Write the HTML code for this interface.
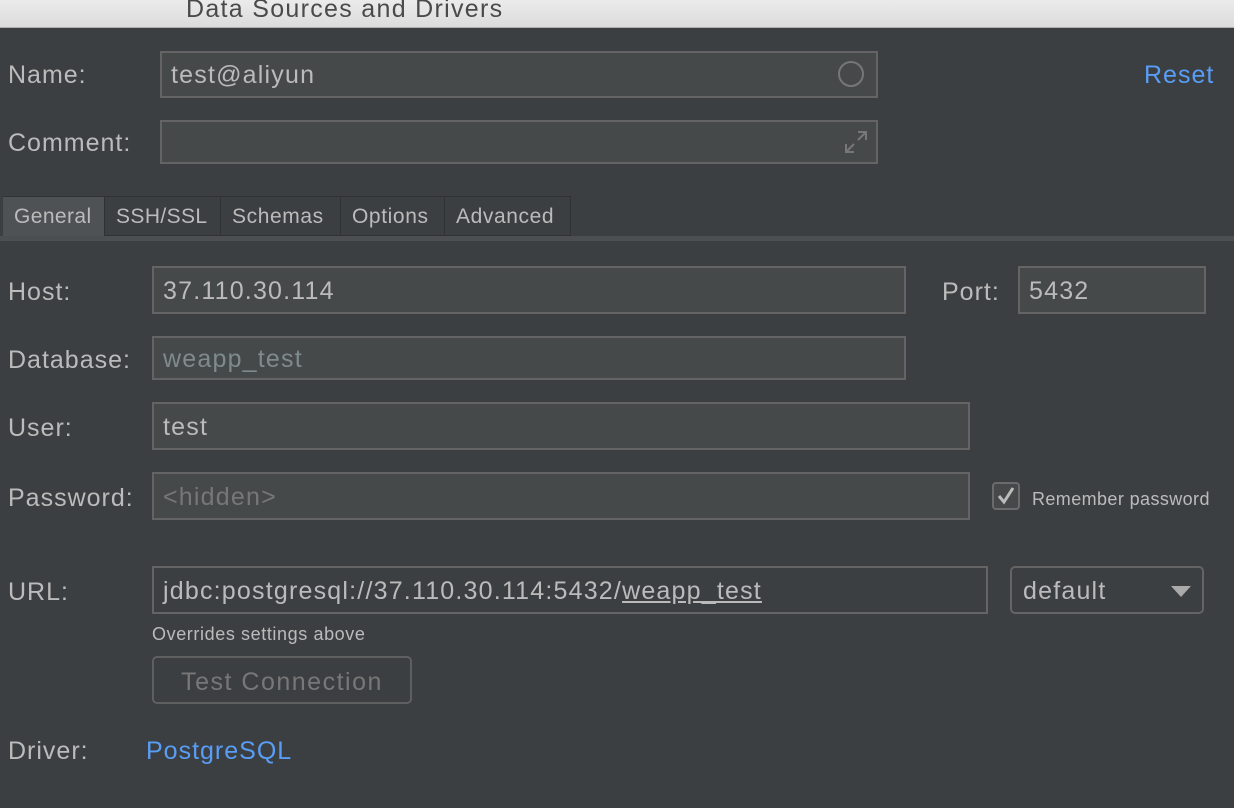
<!DOCTYPE html>
<html><head><style>
body{margin:0;width:1234px;height:808px;background:#3c3f41;font-family:"Liberation Sans",sans-serif;color:#bbbbbb;position:relative;overflow:hidden}
.a{position:absolute}
.t{position:absolute;font-size:25px;line-height:28px;white-space:nowrap;letter-spacing:1px}
.f{position:absolute;background:#45494a;border:2px solid #646464;box-sizing:border-box;font-size:25px;letter-spacing:1.2px;color:#bbbbbb;padding-left:9px;display:flex;align-items:center;padding-top:2px}
</style></head><body>
<div class="a" style="left:0;top:0;width:1234px;height:27px;background:linear-gradient(#ebebeb,#dcdcdc);border-bottom:1px solid #b0b0b0"></div>
<div class="t" style="left:186px;top:-5px;color:#4a4a4a;letter-spacing:1.3px">Data Sources and Drivers</div>

<div class="t" style="left:8px;top:61px">Name:</div>
<div class="f" style="left:160px;top:51px;width:718px;height:47px">test@aliyun</div>
<div class="a" style="left:838px;top:61px;width:26px;height:26px;border:2px solid #777;border-radius:50%;box-sizing:border-box"></div>
<div class="t" style="left:1144px;top:61px;color:#589df6">Reset</div>

<div class="t" style="left:8px;top:129px">Comment:</div>
<div class="f" style="left:160px;top:120px;width:718px;height:44px"></div>
<svg class="a" style="left:842px;top:128px" width="28" height="28" viewBox="0 0 28 28" fill="none" stroke="#777" stroke-width="2"><path d="M16 4h8v8M24 4l-8 8M12 24H4v-8M4 24l8-8"/></svg>

<div class="a" style="left:3px;top:196px;width:568px;height:40px;border:1px solid #2f3133;box-sizing:border-box;background:#3c3f41"></div>
<div class="a" style="left:3px;top:197px;width:101px;height:39px;background:#4e5254"></div>
<div class="a" style="left:104px;top:197px;width:1px;height:39px;background:#2f3133"></div>
<div class="a" style="left:220px;top:197px;width:1px;height:39px;background:#2f3133"></div>
<div class="a" style="left:340px;top:197px;width:1px;height:39px;background:#2f3133"></div>
<div class="a" style="left:444px;top:197px;width:1px;height:39px;background:#2f3133"></div>
<div class="t" style="left:14px;top:203px;font-size:21px;letter-spacing:0.4px">General</div>
<div class="t" style="left:116px;top:203px;font-size:21px;letter-spacing:0.4px">SSH/SSL</div>
<div class="t" style="left:232px;top:203px;font-size:21px;letter-spacing:0.6px">Schemas</div>
<div class="t" style="left:352px;top:203px;font-size:21px;letter-spacing:0.6px">Options</div>
<div class="t" style="left:456px;top:203px;font-size:21px;letter-spacing:0.6px">Advanced</div>
<div class="a" style="left:0;top:236px;width:1234px;height:5px;background:#4b4f52"></div>

<div class="t" style="left:8px;top:278px">Host:</div>
<div class="f" style="left:152px;top:266px;width:754px;height:48px">37.110.30.114</div>
<div class="t" style="left:942px;top:278px">Port:</div>
<div class="f" style="left:1018px;top:266px;width:188px;height:48px">5432</div>

<div class="t" style="left:8px;top:346px">Database:</div>
<div class="f" style="left:152px;top:336px;width:754px;height:44px;color:#7f8b8b">weapp_test</div>

<div class="t" style="left:8px;top:414px">User:</div>
<div class="f" style="left:152px;top:402px;width:818px;height:48px">test</div>

<div class="t" style="left:8px;top:484px">Password:</div>
<div class="f" style="left:152px;top:472px;width:818px;height:48px;color:#777">&lt;hidden&gt;</div>
<div class="a" style="left:992px;top:482px;width:28px;height:28px;border:2px solid #6b6b6b;border-radius:4px;box-sizing:border-box;background:#45494a"></div>
<svg class="a" style="left:994px;top:484px" width="24" height="24" viewBox="0 0 24 24" fill="none" stroke="#bbb" stroke-width="3"><path d="M5 12l5 6 9-14"/></svg>
<div class="t" style="left:1032px;top:485px;font-size:18px;letter-spacing:0.4px">Remember password</div>

<div class="t" style="left:8px;top:578px">URL:</div>
<div class="f" style="left:152px;top:566px;width:836px;height:48px;background:#3c3f41">jdbc:postgresql://37.110.30.114:5432/<span style="text-decoration:underline">weapp_test</span></div>
<div class="f" style="left:1010px;top:566px;width:194px;height:48px;border-radius:5px;background:#3c3f41;padding-left:11px">default</div>
<svg class="a" style="left:1170px;top:584px" width="22" height="14"><path d="M1 2h20l-10 11z" fill="#aaa"/></svg>
<div class="t" style="left:152px;top:620px;font-size:18px;letter-spacing:0.6px">Overrides settings above</div>

<div class="a" style="left:152px;top:656px;width:260px;height:48px;border:2px solid #5e6060;border-radius:5px;box-sizing:border-box;font-size:25px;letter-spacing:1.5px;color:#777;text-align:center;line-height:48px">Test Connection</div>

<div class="t" style="left:8px;top:737px">Driver:</div>
<div class="t" style="left:146px;top:737px;color:#589df6">PostgreSQL</div>
</body></html>
